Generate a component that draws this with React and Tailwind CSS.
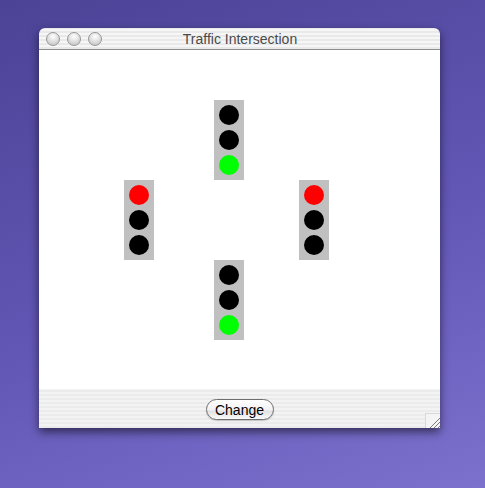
import React, { useState } from 'react';

const Lamp = ({ color }) => (
  <div className="w-5 h-5 rounded-full" style={{ backgroundColor: color }} />
);

const Signal = ({ state }) => (
  <div className="w-[30px] h-[80px] bg-[#c0c0c0] flex flex-col items-center pt-[5px] gap-[5px]">
    <Lamp color={state === 'red' ? '#ff0000' : '#000000'} />
    <Lamp color={state === 'yellow' ? '#ffff00' : '#000000'} />
    <Lamp color={state === 'green' ? '#00ff00' : '#000000'} />
  </div>
);

const WindowButton = () => (
  <div className="w-[14px] h-[14px] rounded-full border border-[#979797] bg-[radial-gradient(circle_at_50%_30%,#ffffff_0%,#e2e2e2_45%,#bdbdbd_100%)]" />
);

const App = () => {
  const [northSouth, setNorthSouth] = useState(true);

  const vertical = northSouth ? 'green' : 'red';
  const horizontal = northSouth ? 'red' : 'green';

  return (
    <div
      className="w-[485px] h-[488px] pl-[39px] pt-[28px] bg-[linear-gradient(160deg,#4c4396_0%,#6257b5_55%,#7c71cd_100%)]"
      style={{ fontFamily: '"Liberation Sans", Arial, sans-serif' }}
    >
      <div className="w-[401px] h-[400px] flex flex-col rounded-t-[6px] overflow-hidden shadow-[0_4px_10px_rgba(0,0,0,0.55)]">
        {/* Title bar */}
        <div className="h-[22px] shrink-0 flex items-center relative border-b border-[#8c8c8c] bg-[repeating-linear-gradient(0deg,#e9e9e9_0px,#e9e9e9_2px,#f6f6f6_2px,#f6f6f6_4px)]">
          <div className="flex gap-[7px] pl-[7px]">
            <WindowButton />
            <WindowButton />
            <WindowButton />
          </div>
          <div className="absolute inset-0 flex items-center justify-center pl-[1px] pt-[1px] text-[14px] text-[#4a4a4a]">
            Traffic Intersection
          </div>
        </div>

        {/* Content */}
        <div className="h-[339px] shrink-0 bg-white pt-[50px] pl-[85px]">
          <div className="grid grid-cols-[90px_85px_30px] grid-rows-[80px_80px_80px]">
            <div />
            <Signal state={vertical} />
            <div />
            <Signal state={horizontal} />
            <div />
            <Signal state={horizontal} />
            <div />
            <Signal state={vertical} />
            <div />
          </div>
        </div>

        {/* Bottom bar */}
        <div className="flex-1 relative flex justify-center pt-[10px] bg-[repeating-linear-gradient(0deg,#ebebeb_0px,#ebebeb_2px,#f3f3f3_2px,#f3f3f3_4px)]">
          <button
            onClick={() => setNorthSouth(v => !v)}
            className="w-[68px] h-[21px] rounded-full border border-[#6e6e6e] text-[14px] text-black leading-none bg-[linear-gradient(180deg,#ffffff_0%,#f2f2f2_50%,#e2e2e2_60%,#fafafa_100%)] shadow-[0_1px_1px_rgba(0,0,0,0.2)]"
          >
            Change
          </button>
          <div className="absolute right-0 bottom-0 w-[15px] h-[15px] border-l border-t border-[#d8d8d8] bg-[#f4f4f4]">
            <svg width="15" height="15" viewBox="0 0 15 15">
              <line x1="4" y1="14" x2="14" y2="4" stroke="#7a7a7a" strokeWidth="1" />
              <line x1="8" y1="14" x2="14" y2="8" stroke="#7a7a7a" strokeWidth="1" />
              <line x1="12" y1="14" x2="14" y2="12" stroke="#7a7a7a" strokeWidth="1" />
            </svg>
          </div>
        </div>
      </div>
    </div>
  );
};

export default App;
